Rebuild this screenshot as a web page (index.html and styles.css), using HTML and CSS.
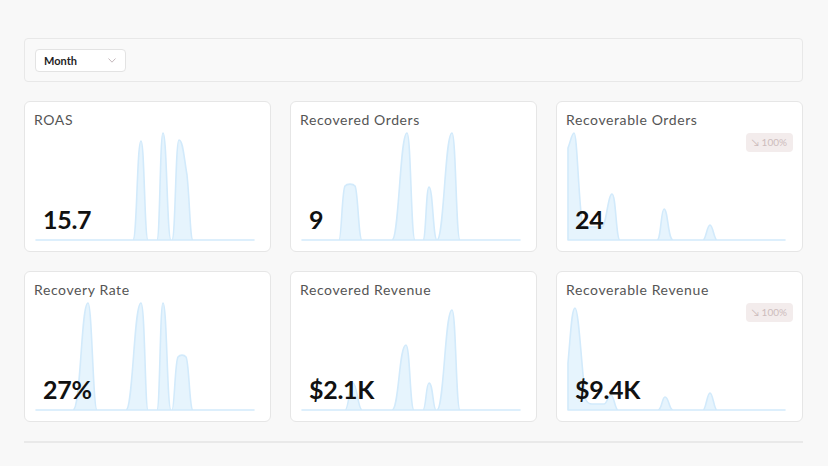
FILE: index.html
```html
<!DOCTYPE html>
<html lang="en">

<head>
  <meta charset="UTF-8">
  <meta name="viewport" content="width=device-width, initial-scale=1.0">
  <title>Recovery dashboard</title>
  <link rel="stylesheet" href="styles.css">
</head>

<body>
  <div class="filters">
    <div class="select">
      <span>Month</span>
      <svg class="chevron" width="8" height="5" viewBox="0 0 8 5"><polyline points="0.5,0.5 4,4.2 7.5,0.5" /></svg>
    </div>
  </div>

  <div class="grid">
    <div class="card">
      <div class="title">ROAS</div>
      <svg class="chart" viewBox="0 0 218 113">
        <path d="M0,112 H97 C101,112 101,13 105,13 C108.5,13 108.5,112 112,112 H121 C124,112 124,5 127,5 C131,5 131,112 135,112 H136 C139.5,112 139.5,12 143,12 C147,12 148,30 151,47 C154,75 154,112 157,112 H218 Z" />
      </svg>
      <div class="value">15.7</div>
    </div>

    <div class="card">
      <div class="title">Recovered Orders</div>
      <svg class="chart" viewBox="0 0 218 113">
        <path d="M0,112 H37 C39.5,112 40,62 43,58 C45,55.5 51,55.5 53,58 C56,62 56.5,112 60,112 H90 C97,112 98,5 105,5 C109,5 109,112 113,112 H121 C124,112 124,59 127,59 C131,59 131,112 135,112 C142,112 143,5 150,5 C154,5 154,112 158,112 H218 Z" />
      </svg>
      <div class="value">9</div>
    </div>

    <div class="card">
      <div class="title">Recoverable Orders</div>
      <svg class="chart" viewBox="0 0 218 113">
        <path d="M0,20 C3,12 4,5 6,5 C9,5 10,60 14,95 C16,99 18,99 20,99 H34 C38,99 40,66 44,66 C48,66 48,112 52,112 H89 C93,112 93,81 96,81 C100,81 100,112 105,112 H135 C138,112 139,97 142,97 C145,97 146,112 149,112 H217 L0,112 Z" />
      </svg>
      <div class="badge">&#8600; 100%</div>
      <div class="value">24</div>
    </div>

    <div class="card">
      <div class="title">Recovery Rate</div>
      <svg class="chart" viewBox="0 0 218 113">
        <path d="M0,112 H37 C45,112 45,5 52,5 C56,5 57,112 61,112 H90 C97,112 98,5 105,5 C109,5 109,112 112,112 H121 C124,112 124,5 127,5 C131,5 131,112 135,112 H136 C138.5,112 139,63 142,59 C144,56.5 148,56.5 150,59 C153,63 153.5,112 157,112 H218 Z" />
      </svg>
      <div class="value">27%</div>
    </div>

    <div class="card">
      <div class="title">Recovered Revenue</div>
      <svg class="chart" viewBox="0 0 218 113">
        <path d="M0,112 H43 C47,112 47,85 51,85 C55,85 56,112 60,112 H90 C97,112 97,47 104,47 C108,47 108,112 112,112 H121 C124,112 124,85 127,85 C131,85 131,112 134,112 H135 C142,112 143,12 150,12 C154,12 154,112 158,112 H218 Z" />
      </svg>
      <div class="value">$2.1K</div>
    </div>

    <div class="card">
      <div class="title">Recoverable Revenue</div>
      <svg class="chart" viewBox="0 0 218 113">
        <path d="M0,65 C3,30 4,10 7,10 C11,10 14,80 18,102 C20,106 22,106 24,106 H36 C39,106 40,97 43,97 C46,97 47,112 50,112 H90 C94,112 94,99 97,99 C101,99 101,112 105,112 H135 C138,112 139,95 142,95 C145,95 146,112 149,112 H217 L0,112 Z" />
      </svg>
      <div class="badge">&#8600; 100%</div>
      <div class="value">$9.4K</div>
    </div>
  </div>

  <div class="divider"></div>
</body>

</html>
```

FILE: styles.css
```css
* {
  margin: 0;
  padding: 0;
  box-sizing: border-box;
}

body {
  background-color: #f8f8f8;
  font-family: "Lato", "Open Sans", sans-serif;
  color: #222;
  padding: 38px 25px 0 24px;
}

/* filter bar */
.filters {
  height: 44px;
  padding: 10px;
  background-color: #f9f9f9;
  border: 1px solid #e8e8e8;
  border-radius: 4px;
}

.select {
  display: flex;
  align-items: center;
  justify-content: space-between;
  width: 91px;
  height: 23px;
  padding: 0 9px 0 8px;
  background-color: #fff;
  border: 1px solid #e3e3e3;
  border-radius: 4px;
  font-size: 11px;
  font-weight: 700;
  color: #1f1f1f;
}

.chevron polyline {
  fill: none;
  stroke: #c4b8bc;
  stroke-width: 1;
}

/* cards */
.grid {
  display: grid;
  grid-template-columns: repeat(3, 1fr);
  gap: 19px;
  margin-top: 19px;
}

.card {
  position: relative;
  height: 151px;
  padding: 10px 10px 11px 9px;
  background-color: #fff;
  border: 1px solid #e6e6e6;
  border-radius: 6px;
}

.title {
  font-size: 14px;
  line-height: 16px;
  color: #555;
  letter-spacing: 0.6px;
}

.chart {
  display: block;
  width: 218px;
  height: 113px;
  margin-left: 2px;
  overflow: visible;
}

.chart path {
  fill: #e6f4fd;
  stroke: #d2eafb;
  stroke-width: 1.6;
  stroke-linejoin: round;
}

.value {
  position: absolute;
  left: 18px;
  top: 101px;
  font-size: 25px;
  font-weight: 700;
  color: #111;
  line-height: 32px;
  letter-spacing: -0.3px;
}

.badge {
  position: absolute;
  right: 9px;
  top: 31px;
  height: 19px;
  padding: 0 6px;
  line-height: 19px;
  font-size: 10px;
  color: #cdbcbc;
  background-color: #f3ecec;
  border-radius: 4px;
}

.divider {
  height: 2px;
  margin-top: 19px;
  background-color: #e9e9e9;
}
```
